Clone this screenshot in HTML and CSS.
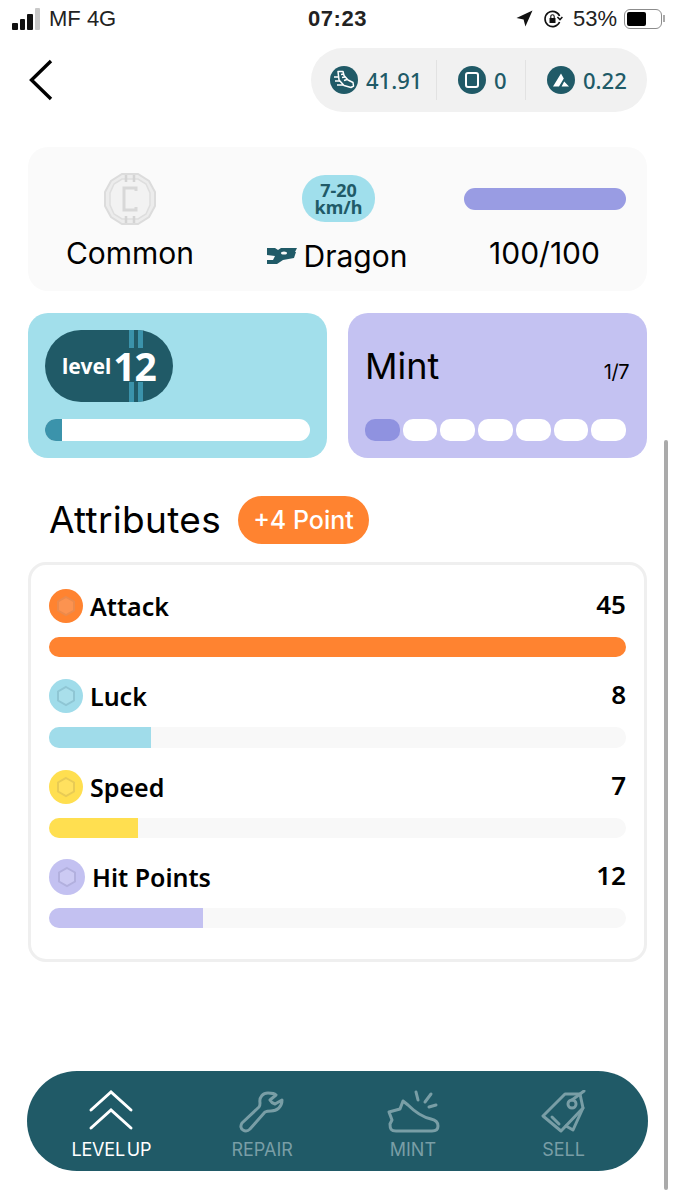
FILE: index.html

```html
<!DOCTYPE html>
<html lang="en">
<head>
  <meta charset="UTF-8">
  <meta name="viewport" content="width=device-width, initial-scale=1.0">
  <title>Attributes</title>
  <link rel="stylesheet" href="styles.css">
</head>
<body>
  <div class="page">
    <!-- status bar -->
    <div class="status">
      <div class="status-left">
        <div class="signal"><i class="s1"></i><i class="s2"></i><i class="s3"></i><i class="s4"></i></div>
        <span>MF 4G</span>
      </div>
      <div class="status-time">07:23</div>
      <div class="status-right">
        <svg width="17" height="17" viewBox="0 0 17 17"><path d="M16.5 0.5 L0.5 8 L7.6 9.4 L9.4 16.5 Z" fill="#111"/></svg>
        <svg width="20" height="20" viewBox="0 0 20 20" fill="none" stroke="#111"><path d="M16.6 7 A7.6 7.6 0 1 0 16.6 13" stroke-width="1.6"/><path d="M14.4 8 L17 10.6 L19.4 8" stroke-width="1.5"/><rect x="6.5" y="9" width="6" height="5" fill="#111" stroke="none"/><path d="M7.8 9 V7.4 A1.7 1.7 0 0 1 11.2 7.4 V9" stroke-width="1.1"/></svg>
        <span class="battery-pct">53%</span>
        <div class="battery"><div class="battery-fill"></div></div>
        <div class="battery-tip"></div>
      </div>
    </div>

    <!-- header -->
    <div class="header">
      <svg class="back" width="26" height="44" viewBox="0 0 26 44" fill="none"><path d="M23 3 L3.5 22 L23 41" stroke="#000" stroke-width="3.4"/></svg>
      <div class="wallet">
        <div class="wallet-item">
          <div class="coin">
            <svg width="22" height="20" viewBox="0 0 22 20" fill="none" stroke="#fff" stroke-width="1.5" stroke-linejoin="round"><path d="M5 1.5 L10 1.5 L11 5.5 L15 10 L20 12.5 L20.5 16 L18 17.5 L11 15.5 L6 10 Z"/><path d="M8 4.5 L11 4 M9 7.5 L12 7 M11 10.5 L14 9.5"/><path d="M1 7 L5 7 M2 11 L7 11 M4 15 L10 15"/></svg>
          </div>
          <span>41.91</span>
        </div>
        <div class="wallet-item">
          <div class="coin"><div class="coin-square"></div></div>
          <span>0</span>
        </div>
        <div class="wallet-item">
          <div class="coin">
            <svg width="18" height="16" viewBox="0 0 18 16"><path d="M9 1.5 L11.8 6.5 L7 14.5 L1 14.5 Z M12.2 9.5 L17 14.5 L9.6 14.5 Z" fill="#fff"/></svg>
          </div>
          <span>0.22</span>
        </div>
      </div>
    </div>

    <!-- summary -->
    <div class="summary">
      <div class="summary-col">
        <div class="summary-top">
          <svg width="52" height="52" viewBox="0 0 52 52">
            <path d="M18 1 H34 L45 8 L51 19 V33 L45 44 L34 51 H18 L7 44 L1 33 V19 L7 8 Z" fill="#ececec" stroke="#dcdcdc" stroke-width="2"/>
            <path d="M18 6 H34 L42 11 L46 20 V32 L42 41 L34 46 H18 L10 41 L6 32 V20 L10 11 Z" fill="#f2f2f2" stroke="#dedede" stroke-width="1.5"/>
            <path d="M32 18 V15 H20 V37 H32 V34" fill="none" stroke="#d8d8d8" stroke-width="3"/>
            <path d="M22 2 V9 M30 2 V9 M22 43 V50 M30 43 V50" stroke="#d4d4d4" stroke-width="2.5"/>
          </svg>
        </div>
        <div class="summary-label">Common</div>
      </div>
      <div class="summary-col">
        <div class="summary-top"><div class="speed">7-20<br>km/h</div></div>
        <div class="summary-label type">
          <svg width="30" height="18" viewBox="0 0 30 18"><path d="M0 1 H8 L11 3 L14 1 H30 L28 5 H29 L27 11 L16 13 L10 17 H0 V13 H6 L8 9 L0 8 Z" fill="#205a67"/><ellipse cx="17" cy="6" rx="3" ry="1.6" fill="#fafafa"/></svg>
          <span>Dragon</span>
        </div>
      </div>
      <div class="summary-col">
        <div class="summary-top"><div class="durability"></div></div>
        <div class="summary-label">100/100</div>
      </div>
    </div>

    <!-- level and mint -->
    <div class="cards">
      <div class="card card-level">
        <div class="level-badge">
          <span class="stripes stripes-top"></span>
          <span class="stripes stripes-bottom"></span>
          <span class="level-word">level</span><span class="level-num">12</span>
        </div>
        <div class="level-bar"><div class="level-fill"></div></div>
      </div>
      <div class="card card-mint">
        <div class="mint-head">
          <span class="mint-title">Mint</span>
          <span class="mint-count">1/7</span>
        </div>
        <div class="mint-steps">
          <i class="step on"></i><i class="step"></i><i class="step"></i><i class="step"></i><i class="step"></i><i class="step"></i><i class="step"></i>
        </div>
      </div>
    </div>

    <!-- attributes -->
    <div class="attr-head">
      <h2>Attributes</h2>
      <div class="points">+4 Point</div>
    </div>
    <div class="attr-card">
      <div class="attr">
        <div class="attr-row">
          <div class="attr-name"><svg class="hex" width="34" height="34" viewBox="0 0 34 34"><circle cx="17" cy="17" r="17" fill="#ff8330"/><path d="M17 8 L25 12.5 V21.5 L17 26 L9 21.5 V12.5 Z" fill="#fc9350" stroke="#ec8a4b" stroke-width="2"/></svg>Attack</div>
          <div class="attr-value">45</div>
        </div>
        <div class="track"><div class="fill attack" style="width: 100%"></div></div>
      </div>
      <div class="attr">
        <div class="attr-row">
          <div class="attr-name"><svg class="hex" width="34" height="34" viewBox="0 0 34 34"><circle cx="17" cy="17" r="17" fill="#a0dcea"/><path d="M17 8 L25 12.5 V21.5 L17 26 L9 21.5 V12.5 Z" fill="#a9dfeb" stroke="#8fc6d4" stroke-width="2"/></svg>Luck</div>
          <div class="attr-value">8</div>
        </div>
        <div class="track"><div class="fill luck" style="width: 17.7%"></div></div>
      </div>
      <div class="attr">
        <div class="attr-row">
          <div class="attr-name"><svg class="hex" width="34" height="34" viewBox="0 0 34 34"><circle cx="17" cy="17" r="17" fill="#ffdf50"/><path d="M17 8 L25 12.5 V21.5 L17 26 L9 21.5 V12.5 Z" fill="#ffe15f" stroke="#e8cb55" stroke-width="2"/></svg>Speed</div>
          <div class="attr-value">7</div>
        </div>
        <div class="track"><div class="fill speed-bar" style="width: 15.5%"></div></div>
      </div>
      <div class="attr">
        <div class="attr-row">
          <div class="attr-name hit"><svg class="hex" width="36" height="36" viewBox="0 0 36 36"><circle cx="18" cy="18" r="18" fill="#c3c1f1"/><path d="M18 9 L26 13.5 V22.5 L18 27 L10 22.5 V13.5 Z" fill="#cccaf3" stroke="#b2b0de" stroke-width="2"/></svg>Hit Points</div>
          <div class="attr-value">12</div>
        </div>
        <div class="track"><div class="fill hitpoints" style="width: 26.7%"></div></div>
      </div>
    </div>

    <!-- bottom nav -->
    <div class="tabs">
      <div class="tab active">
        <svg width="46" height="42" viewBox="0 0 46 42" fill="none" stroke="#fff" stroke-width="3" stroke-linecap="round"><path d="M3 21 L23 3 L43 21"/><path d="M3 39 L23 21 L43 39"/></svg>
        <span class="tab-label">LEVEL UP</span>
      </div>
      <div class="tab">
        <svg width="46" height="44" viewBox="0 0 46 42" fill="none" stroke="#799ea6" stroke-width="3" stroke-linejoin="round"><path d="M29 2 C24 2 20 6 21 12 C21 14 21 15 20 16 L3 32 C1 35 2 38 4 39 C7 41 9 40 11 38 L26 21 C28 20 30 20 32 20 C38 20 43 16 43 9 L36 13 C33 12 32 11 31 9 L37 4 C35 2 32 2 29 2 Z"/></svg>
        <span class="tab-label">REPAIR</span>
      </div>
      <div class="tab">
        <svg width="54" height="44" viewBox="0 0 54 42" fill="none" stroke="#799ea6" stroke-width="3" stroke-linejoin="round" stroke-linecap="round"><path d="M3 21 L14 18 L17 10 L22 14 C30 22 36 26 45 28 C50 29 52 32 52 35 C52 39 49 40 46 40 L10 40 C5 40 4 38 4 33 L6 29 Z"/><path d="M30 1 L32 9 M45 3 L39 11 M50 14 L43 16"/></svg>
        <span class="tab-label">MINT</span>
      </div>
      <div class="tab">
        <svg width="46" height="44" viewBox="0 0 46 44" fill="none" stroke="#799ea6" stroke-width="3" stroke-linejoin="round" stroke-linecap="round"><path d="M2 26 L24 4 L39 4 L42 18 L20 41 Z"/><circle cx="31" cy="14" r="4"/><path d="M31 10 L43 1"/><path d="M11 27 L18 34"/><path d="M42 18 L32 40 L25 36"/></svg>
        <span class="tab-label">SELL</span>
      </div>
    </div>

    <div class="scrollbar"></div>
  </div>
</body>
</html>
```

FILE: styles.css

```css
/* General Styling */
* {
  box-sizing: border-box;
}

body {
  margin: 0;
  background-color: #fff;
  color: #000;
  font-family: "Inter", "Liberation Sans", sans-serif;
}

.page {
  position: relative;
  width: 675px;
  height: 1200px;
  overflow: hidden;
  padding: 0 28px;
}

/* Status bar */
.status {
  display: grid;
  grid-template-columns: 1fr 1fr 1fr;
  align-items: center;
  height: 37px;
  margin: 0 -18px;
  font-family: "Liberation Sans", sans-serif;
  font-size: 22px;
  color: #222;
}

.status-left {
  display: flex;
  align-items: center;
  gap: 9px;
  margin-left: 2px;
}

.signal {
  display: flex;
  align-items: flex-end;
  gap: 2px;
  height: 22px;
}

.signal i {
  display: block;
  width: 5.5px;
  border-radius: 1px;
  background-color: #111;
}

.signal .s1 { height: 7px; }
.signal .s2 { height: 11px; }
.signal .s3 { height: 16px; }
.signal .s4 { height: 22px; background-color: #c9c9c9; }

.status-time {
  text-align: center;
  font-size: 22px;
  font-weight: 700;
  letter-spacing: 0.5px;
}

.status-right {
  display: flex;
  align-items: center;
  justify-content: flex-end;
  gap: 10px;
}

.battery-pct {
  margin-right: -3px;
}

.battery {
  width: 38px;
  height: 20px;
  padding: 2px;
  border: 1.5px solid #8c8c8c;
  border-radius: 6px;
}

.battery-fill {
  width: 19px;
  height: 100%;
  border-radius: 2px;
  background-color: #000;
}

.battery-tip {
  width: 2px;
  height: 7px;
  margin-left: -9px;
  background-color: #aaa;
}

/* Header */
.header {
  display: flex;
  align-items: center;
  justify-content: space-between;
  height: 64px;
  margin-top: 11px;
}

.wallet {
  display: flex;
  align-items: center;
  width: 336px;
  height: 64px;
  padding: 0 0 0 19px;
  border-radius: 32px;
  background-color: #f1f1f1;
}

.wallet-item {
  display: flex;
  align-items: center;
  gap: 8px;
  height: 40px;
  color: #205a67;
  font-family: "Noto Sans", sans-serif;
  font-size: 22px;
  font-weight: 500;
}

.wallet-item:nth-child(1) {
  width: 107px;
  border-right: 1px solid #e2e2e2;
}

.wallet-item:nth-child(2) {
  width: 89px;
  padding-left: 21px;
  border-right: 1px solid #e2e2e2;
}

.wallet-item:nth-child(3) {
  padding-left: 21px;
}

.coin {
  display: flex;
  align-items: center;
  justify-content: center;
  flex: none;
  width: 28px;
  height: 28px;
  border-radius: 50%;
  background-color: #205a67;
}

.coin-square {
  width: 14px;
  height: 16px;
  border: 2.5px solid #fff;
  border-radius: 3px;
}

/* Summary */
.summary {
  display: grid;
  grid-template-columns: 204px 210px 205px;
  height: 144px;
  margin-top: 35px;
  border-radius: 20px;
  background-color: #fafafa;
}

.summary-col {
  display: flex;
  flex-direction: column;
  align-items: center;
}

.summary-top {
  display: flex;
  align-items: center;
  justify-content: center;
  width: 100%;
  height: 76px;
  padding-top: 27px;
}

.summary-label {
  margin-top: 12px;
  font-size: 30px;
  line-height: 36px;
}

.type {
  display: flex;
  align-items: center;
  gap: 7px;
  margin-top: 15px;
}

.speed {
  display: flex;
  align-items: center;
  justify-content: center;
  width: 73px;
  height: 47px;
  margin-left: 3px;
  border-radius: 23px;
  background-color: #a0dfec;
  color: #205a67;
  font-family: "Noto Sans", sans-serif;
  font-size: 18px;
  font-weight: 700;
  line-height: 17px;
  text-align: center;
}

.durability {
  width: 162px;
  height: 22px;
  border-radius: 11px;
  background-color: #999ce3;
}

/* Level and mint */
.cards {
  display: grid;
  grid-template-columns: 299px 299px;
  gap: 21px;
  margin-top: 22px;
}

.card {
  display: flex;
  flex-direction: column;
  justify-content: space-between;
  height: 145px;
  padding: 17px;
  border-radius: 20px;
}

.card-level {
  background-color: #a2dfeb;
}

.card-mint {
  background-color: #c4c2f2;
  padding-right: 21px;
}

.level-badge {
  position: relative;
  display: flex;
  align-items: center;
  justify-content: center;
  gap: 2px;
  width: 128px;
  height: 72px;
  overflow: hidden;
  border-radius: 36px;
  background-color: #205a67;
  color: #fff;
}

.stripes {
  position: absolute;
  left: 84px;
  width: 15px;
  background: linear-gradient(90deg, #3b93ab 0 5px, #205a67 5px 9px, #3b93ab 9px 14px, #205a67 14px);
}

.stripes-top { top: 0; height: 18px; }
.stripes-bottom { bottom: 0; height: 20px; }

.level-word {
  font-family: "Noto Sans", sans-serif;
  font-size: 21px;
  font-weight: 700;
}

.level-num {
  font-family: "Noto Sans", sans-serif;
  font-size: 39px;
  font-weight: 700;
  line-height: 40px;
  letter-spacing: -1px;
}

.level-bar {
  height: 22px;
  overflow: hidden;
  border-radius: 11px;
  background-color: #fff;
}

.level-fill {
  width: 17px;
  height: 100%;
  background-color: #3b93ab;
}

.mint-head {
  display: flex;
  align-items: baseline;
  justify-content: space-between;
  margin-top: 15px;
}

.mint-title {
  font-size: 36px;
  line-height: 42px;
}

.mint-count {
  margin-right: -3px;
  font-size: 20px;
  letter-spacing: -0.5px;
}

.mint-steps {
  display: flex;
  gap: 3px;
}

.step {
  display: block;
  flex: 1;
  height: 22px;
  border-radius: 10px;
  background-color: #fff;
}

.step.on {
  background-color: #8f92e0;
}

/* Attributes */
.attr-head {
  display: flex;
  align-items: center;
  gap: 17px;
  height: 48px;
  margin-top: 38px;
  padding-left: 21px;
}

.attr-head h2 {
  margin: 0;
  font-size: 37px;
  font-weight: 400;
  line-height: 52px;
  letter-spacing: 0.3px;
}

.points {
  display: flex;
  align-items: center;
  justify-content: center;
  width: 131px;
  height: 48px;
  border-radius: 24px;
  background-color: #ff8330;
  color: #fff;
  font-size: 25px;
  font-weight: 500;
}

.attr-card {
  display: flex;
  flex-direction: column;
  gap: 22px;
  height: 400px;
  margin-top: 18px;
  padding: 24px 18px 0;
  border: 3px solid #efefef;
  border-radius: 18px;
}

.attr-row {
  display: flex;
  align-items: center;
  justify-content: space-between;
  height: 34px;
}

.attr-name {
  display: flex;
  align-items: center;
  gap: 7px;
  font-family: "Noto Sans", sans-serif;
  font-size: 25px;
  font-weight: 600;
}

.attr-value {
  margin-top: -4px;
  font-family: "Noto Sans", sans-serif;
  font-size: 26px;
  font-weight: 600;
}

.track {
  height: 20px;
  margin-top: 14px;
  overflow: hidden;
  border-radius: 10px;
  background-color: #f8f8f8;
}

.attr:nth-child(2) .track {
  height: 21px;
}

.fill {
  height: 100%;
}

.attack { background-color: #ff8330; }
.luck { background-color: #a0dcea; }
.speed-bar { background-color: #ffdf50; }
.hitpoints { background-color: #c3c1f1; }

/* Bottom nav */
.tabs {
  display: grid;
  grid-template-columns: 1fr 1fr 1fr 1fr;
  width: 621px;
  height: 100px;
  margin-top: 109px;
  margin-left: -1px;
  padding: 0 9px;
  border-radius: 50px;
  background-color: #205a67;
}

.tab {
  display: flex;
  flex-direction: column;
  align-items: center;
  justify-content: flex-end;
  height: 90px;
  gap: 5px;
  color: #799ea6;
  font-size: 18px;
}

.tab.active {
  gap: 8px;
  color: #fff;
  letter-spacing: -0.2px;
  word-spacing: -3px;
}

.tab-label {
  line-height: 22px;
}

/* Scrollbar sits over the page */
.scrollbar {
  position: absolute;
  top: 440px;
  right: 7px;
  width: 4px;
  height: 750px;
  border-radius: 2px;
  background-color: #aaa;
}
```
